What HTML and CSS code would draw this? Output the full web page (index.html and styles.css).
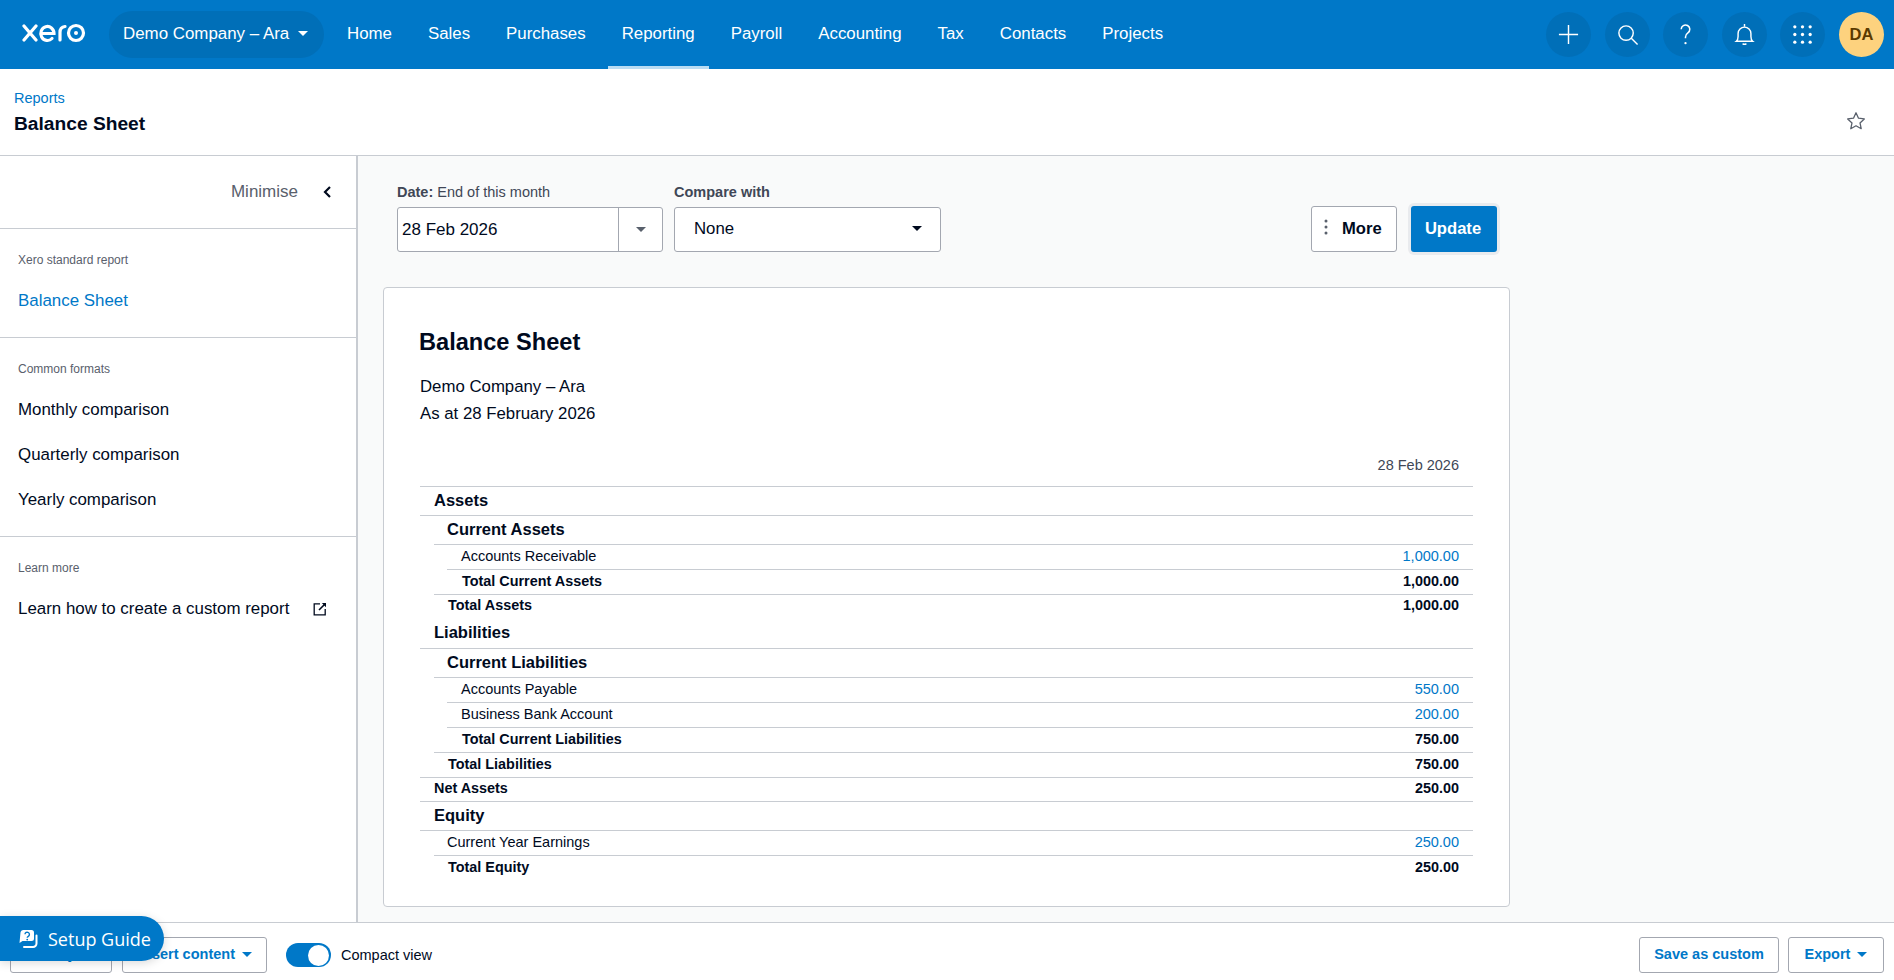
FILE: index.html
```html
<!DOCTYPE html>
<html lang="en">
<head>
<meta charset="utf-8">
<title>Balance Sheet</title>
<link rel="stylesheet" href="styles.css">
</head>
<body>
<div class="app">
  <header class="topbar">
    <svg class="logo" viewBox="0 0 64 20" role="img" aria-label="xero" fill="none" stroke="#fff" stroke-width="3.200" stroke-linecap="round">
      <line x1="2" y1="3" x2="14" y2="17"/><line x1="14" y1="3" x2="2" y2="17"/>
      <path d="M19 10.500h13a6.600 7 0 1 0-2 5"/>
      <path d="M38 17V9.500q0-5.500 5-6"/>
      <circle cx="54" cy="10" r="7.500"/><circle cx="54" cy="10" r="2" fill="#fff" stroke="none"/>
    </svg>
    <button class="org">Demo Company – Ara <span class="caret caret-white"></span></button>
    <nav class="nav">
      <a>Home</a><a>Sales</a><a>Purchases</a><a class="active">Reporting</a><a>Payroll</a><a>Accounting</a><a>Tax</a><a>Contacts</a><a>Projects</a>
    </nav>
    <div class="tools">
      <span class="tool"><svg viewBox="0 0 24 24" fill="none" stroke="#fff" stroke-width="1.500"><path d="M12 2v20M2 12h20"/></svg></span>
      <span class="tool"><svg viewBox="0 0 24 24" fill="none" stroke="#fff" stroke-width="1.500"><circle cx="10.500" cy="10.500" r="7.500"/><path d="M16 16l6.500 6.500"/></svg></span>
      <span class="tool"><svg viewBox="0 0 24 24" fill="none" stroke="#fff" stroke-width="1.600"><path d="M7.500 6.500a4.500 4.500 0 1 1 7 3.800c-1.700 1.200-2.500 2.200-2.500 4.200v1.500"/><circle cx="12" cy="21" r="1.200" fill="#fff" stroke="none"/></svg></span>
      <span class="tool"><svg viewBox="0 0 24 24" fill="none" stroke="#fff" stroke-width="1.500"><path d="M3.500 19h17c-1.300-1-1.800-2.500-1.800-5v-3a6.700 6.700 0 0 0-13.400 0v3c0 2.500-.5 4-1.800 5z"/><path d="M12 1v3M10 21.500q2 1.500 4 0"/></svg></span>
      <span class="tool"><svg viewBox="0 0 24 24" fill="#fff"><circle cx="4" cy="4" r="1.700"/><circle cx="12" cy="4" r="1.700"/><circle cx="20" cy="4" r="1.700"/><circle cx="4" cy="12" r="1.700"/><circle cx="12" cy="12" r="1.700"/><circle cx="20" cy="12" r="1.700"/><circle cx="4" cy="20" r="1.700"/><circle cx="12" cy="20" r="1.700"/><circle cx="20" cy="20" r="1.700"/></svg></span>
      <span class="avatar">DA</span>
    </div>
  </header>

  <section class="pagehead">
    <div>
      <a class="crumb">Reports</a>
      <h1 class="pagetitle">Balance Sheet</h1>
    </div>
    <svg class="star" viewBox="0 0 20 20" fill="none" stroke="#59606c" stroke-width="1.300" stroke-linejoin="round"><path d="M10 1.800l2.500 5.400 5.800.7-4.300 4 1.200 5.800-5.200-2.900-5.200 2.900 1.200-5.800-4.300-4 5.800-.7z"/></svg>
  </section>

  <div class="body">
    <aside class="sidebar">
      <div class="minimise"><span>Minimise</span>
        <svg viewBox="0 0 10 14" class="chev" fill="none" stroke="#000a1e" stroke-width="2.200"><path d="M8 2L3 7l5 5"/></svg>
      </div>
      <div class="side-group g1">
        <div class="side-label">Xero standard report</div>
        <a class="side-link current">Balance Sheet</a>
      </div>
      <div class="side-group g2">
        <div class="side-label">Common formats</div>
        <a class="side-link">Monthly comparison</a>
        <a class="side-link">Quarterly comparison</a>
        <a class="side-link">Yearly comparison</a>
      </div>
      <div class="side-group g3">
        <div class="side-label">Learn more</div>
        <a class="side-link with-icon">Learn how to create a custom report
          <svg viewBox="0 0 14 14" fill="none" stroke="#000a1e" stroke-width="1.300"><path d="M7 1.800H1.200v11h11V7"/><path d="M6 8l6-6" stroke-width="1.600"/><path d="M8.800 1h4.200v4.200z" fill="#000a1e" stroke="none"/></svg>
        </a>
      </div>
    </aside>

    <main class="main">
      <div class="controls">
        <div class="field date-field">
          <label class="field-label"><b>Date:</b> End of this month</label>
          <div class="date-input"><span class="date-value">28 Feb 2026</span><span class="date-btn"><span class="caret caret-grey"></span></span></div>
        </div>
        <div class="field compare-field">
          <label class="field-label"><b>Compare with</b></label>
          <div class="select"><span>None</span><span class="caret caret-dark"></span></div>
        </div>
        <div class="actions">
          <button class="btn more"><svg viewBox="0 0 4 16" fill="#59606c"><circle cx="2" cy="2" r="1.500"/><circle cx="2" cy="8" r="1.500"/><circle cx="2" cy="14" r="1.500"/></svg>More</button>
          <button class="btn update">Update</button>
        </div>
      </div>

      <article class="card">
        <h2 class="report-title">Balance Sheet</h2>
        <p class="report-meta">Demo Company – Ara</p>
        <p class="report-meta">As at 28 February 2026</p>
        <div class="col-head">28 Feb 2026</div>
        <div class="report">
          <div class="row head l0 line0">Assets</div>
          <div class="row head l1 line0">Current Assets</div>
          <div class="row l2 line1"><span>Accounts Receivable</span><a class="amt">1,000.00</a></div>
          <div class="row total l2b line2"><span>Total Current Assets</span><span>1,000.00</span></div>
          <div class="row total l1b line1"><span>Total Assets</span><span>1,000.00</span></div>
          <div class="row head l0 noline">Liabilities</div>
          <div class="row head l1 line0">Current Liabilities</div>
          <div class="row l2 line1"><span>Accounts Payable</span><a class="amt">550.00</a></div>
          <div class="row l2 line2"><span>Business Bank Account</span><a class="amt">200.00</a></div>
          <div class="row total l2b line2"><span>Total Current Liabilities</span><span>750.00</span></div>
          <div class="row total l1b line1"><span>Total Liabilities</span><span>750.00</span></div>
          <div class="row total l0 line0"><span>Net Assets</span><span>250.00</span></div>
          <div class="row head l0 line0">Equity</div>
          <div class="row l1 line0"><span>Current Year Earnings</span><a class="amt">250.00</a></div>
          <div class="row total l1b line1"><span>Total Equity</span><span>250.00</span></div>
        </div>
      </article>
    </main>
  </div>

  <footer class="footer">
    <button class="btn foot first">Edit layout</button>
    <button class="btn foot second">Insert content <span class="caret caret-blue"></span></button>
    <span class="toggle"><span class="knob"></span></span>
    <span class="toggle-label">Compact view</span>
    <span class="spacer"></span>
    <button class="btn foot save">Save as custom</button>
    <button class="btn foot export">Export <span class="caret caret-blue"></span></button>
  </footer>

  <button class="setup">
    <svg viewBox="0 0 20 20"><path d="M6 1h7.500a2.500 2.500 0 0 1 2.500 2.500v6a2.500 2.500 0 0 1-2.500 2.500H4.500L1.500 14l1-10.500A2.800 2.800 0 0 1 6 1z" fill="#fff"/><path d="M18.500 6.500v8a3.500 3.500 0 0 1-3.500 3.500H6" fill="none" stroke="#fff" stroke-width="2" stroke-linecap="round"/><path d="M7 5.300a2.200 2.200 0 1 1 3.300 2c-.8.500-1.100.9-1.100 1.500" fill="none" stroke="#0078c8" stroke-width="1.400"/><circle cx="9.200" cy="10.600" r=".9" fill="#0078c8"/></svg>
    Setup Guide
  </button>
</div>
</body>
</html>
```
FILE: styles.css
```css
* { box-sizing: border-box; }
html, body { margin: 0; height: 100%; }
body { font-family: "Liberation Sans", Arial, sans-serif; color: #000a1e; background: #fff; overflow: hidden; }
h1, h2, p { margin: 0; }
button { font-family: inherit; cursor: pointer; }

.app { position: relative; height: 980px; display: flex; flex-direction: column; }

.topbar { height: 69px; flex: none; background: #0078c8; display: flex; align-items: center; color: #fff; padding: 0 10px 0 22px; }
.logo { width: 64px; height: 20px; flex: none; margin-top: -3px; }
.org { margin-left: 23px; height: 47px; width: 215px; border: 0; border-radius: 24px; background: #006fb8; color: #fff; font-size: 16.900px; padding: 0 0 2px 14px; display: flex; align-items: center; gap: 9px; white-space: nowrap; }
.nav { display: flex; height: 100%; margin-left: 5px; }
.nav a { position: relative; display: flex; align-items: center; padding: 0 18px 2px; font-size: 16.850px; color: #fff; }
.nav a.active::after { content: ""; position: absolute; left: 4px; right: 4px; bottom: 0; height: 3px; background: #b9dcf3; }
.tools { margin-left: auto; display: flex; gap: 13.600px; }
.tool { width: 45px; height: 45px; border-radius: 50%; background: #006fb8; display: flex; align-items: center; justify-content: center; }
.tool svg { width: 23px; height: 23px; }
.avatar { width: 45px; height: 45px; border-radius: 50%; background: #fdd27e; color: #5b3a00; font-weight: 700; font-size: 16.500px; display: flex; align-items: center; justify-content: center; }

.caret { display: inline-block; width: 0; height: 0; border-left: 5px solid transparent; border-right: 5px solid transparent; border-top: 5px solid; }
.caret-white { color: #fff; }
.caret-grey { color: #59606c; }
.caret-dark { color: #000a1e; }
.caret-blue { color: #0078c8; }

.pagehead { height: 87px; flex: none; border-bottom: 1px solid #c8ccd2; display: flex; justify-content: space-between; align-items: center; padding: 0 28px 0 14px; }
.crumb { display: block; color: #0078c8; font-size: 14.500px; line-height: 18px; }
.pagetitle { font-size: 19.200px; line-height: 24px; font-weight: 700; margin-top: 5px; }
.star { width: 20px; height: 20px; margin-top: 18px; }

.body { flex: 1; min-height: 0; display: flex; }
.sidebar { width: 358px; flex: none; border-right: 2px solid #c8ccd2; background: #fff; }
.minimise { height: 73px; border-bottom: 1px solid #c8ccd2; display: flex; align-items: center; justify-content: flex-end; padding-right: 24px; gap: 24px; font-size: 17px; color: #59606c; }
.chev { width: 10px; height: 14px; }
.side-group { border-bottom: 1px solid #c8ccd2; padding: 24px 18px 0; }
.g1 { height: 109px; }
.g2 { height: 199px; }
.g3 { border-bottom: 0; }
.side-label { font-size: 12px; line-height: 14px; color: #59606c; margin-bottom: 11px; }
.side-link { display: flex; align-items: center; height: 45px; font-size: 16.900px; color: #000a1e; }
.side-link.current { color: #0078c8; }
.with-icon svg { width: 14px; height: 14px; margin-left: 24px; }

.main { flex: 1; min-width: 0; background: #f9fafa; padding: 0 0 0 25px; }
.controls { width: 1100px; margin-left: 14px; height: 131px; padding-top: 27px; display: flex; align-items: flex-start; }
.field { display: flex; flex-direction: column; }
.field-label { font-size: 14.500px; line-height: 18px; color: #404756; height: 24px; }
.date-field { width: 266px; }
.compare-field { width: 267px; margin-left: 11px; }
.date-input { height: 45px; border: 1px solid #a3a7b0; border-radius: 3px; background: #fff; display: flex; }
.date-value { flex: 1; display: flex; align-items: center; padding-left: 4px; font-size: 17px; }
.date-btn { width: 44px; border-left: 1px solid #a3a7b0; display: flex; align-items: center; justify-content: center; }
.select { height: 45px; border: 1px solid #a3a7b0; border-radius: 3px; background: #fff; display: flex; align-items: center; justify-content: space-between; padding: 0 18px 2px 19px; font-size: 16.800px; }
.actions { margin-left: auto; display: flex; gap: 14px; padding-top: 23px; }
.btn { border: 1px solid #a3a7b0; border-radius: 3px; background: #fff; }
.more { width: 86px; height: 46px; font-size: 16.600px; font-weight: 700; color: #000a1e; display: flex; align-items: center; padding: 0 0 0 12px; gap: 14px; }
.more svg { width: 4px; height: 16px; margin-top: -4px; }
.update { width: 86px; height: 46px; border: 0; padding: 0 2px 0 0; font-size: 16.600px; font-weight: 700; color: #fff; background: #0078c8; box-shadow: 0 0 0 3px #e9ebee; }

.card { width: 1127px; height: 620px; background: #fff; border: 1px solid #c8ccd2; border-radius: 4px; padding: 39px 36px 0 36px; }
.report-title { font-size: 23.600px; line-height: 30px; font-weight: 700; margin-left: -1px; margin-bottom: 17px; }
.report-meta { font-size: 16.800px; line-height: 26.500px; }
.col-head { font-size: 14.500px; line-height: 20px; color: #404756; text-align: right; padding: 28px 14px 11px 0; }
.report { display: flex; flex-direction: column; }
.row { height: 24.800px; display: flex; align-items: center; justify-content: space-between; font-size: 14.500px; padding-right: 14px; padding-bottom: 2px; border-top: 1px solid #c8ccd2; white-space: nowrap; }
.row.head { height: 29px; font-size: 16.500px; font-weight: 700; }
.row.total { font-size: 14.400px; font-weight: 700; }
.row.noline { border-top: 0; height: 30px; }
.row.line1 { margin-left: 14px; }
.row.line2 { margin-left: 27px; }
.row.l0.line0 { padding-left: 14px; }
.row.l1.line0 { padding-left: 27px; }
.row.l0.noline { padding-left: 14px; }
.row.l2.line1 { padding-left: 27px; }
.row.l2.line2 { padding-left: 14px; }
.row.l2b.line2 { padding-left: 15px; }
.row.l1b.line1 { padding-left: 14px; }
.amt { color: #0078c8; }

.footer { height: 58px; flex: none; background: #fff; border-top: 1px solid #c8ccd2; display: flex; align-items: center; padding: 7px 10px 0; }
.foot { height: 36px; font-size: 14.500px; font-weight: 700; color: #0078c8; white-space: nowrap; padding: 0 0 3px; }
.first { width: 102px; }
.second { width: 145px; margin-left: 10px; text-align: right; padding-right: 14px; }
.foot .caret { margin-left: 3px; vertical-align: 2px; }
.toggle { width: 45px; height: 24px; margin-left: 19px; border-radius: 12px; background: #0078c8; display: flex; align-items: center; justify-content: flex-end; padding-right: 2px; }
.knob { width: 21px; height: 21px; border-radius: 50%; background: #fff; }
.toggle-label { margin-left: 10px; font-size: 14.500px; }
.spacer { flex: 1; }
.save { width: 140px; }
.export { width: 96px; margin-left: 9px; }

.setup { position: absolute; left: 0; top: 916px; height: 45px; width: 164px; border: 0; border-radius: 0 23px 23px 0; background: #0078c8; color: #fff; font-family: "Open Sans", sans-serif; font-size: 18px; font-weight: 400; display: flex; align-items: center; gap: 10px; padding: 0 0 0 18px; box-shadow: 0 2px 10px rgba(0,0,0,.15); white-space: nowrap; }
.setup svg { width: 20px; height: 20px; flex: none; }
```
